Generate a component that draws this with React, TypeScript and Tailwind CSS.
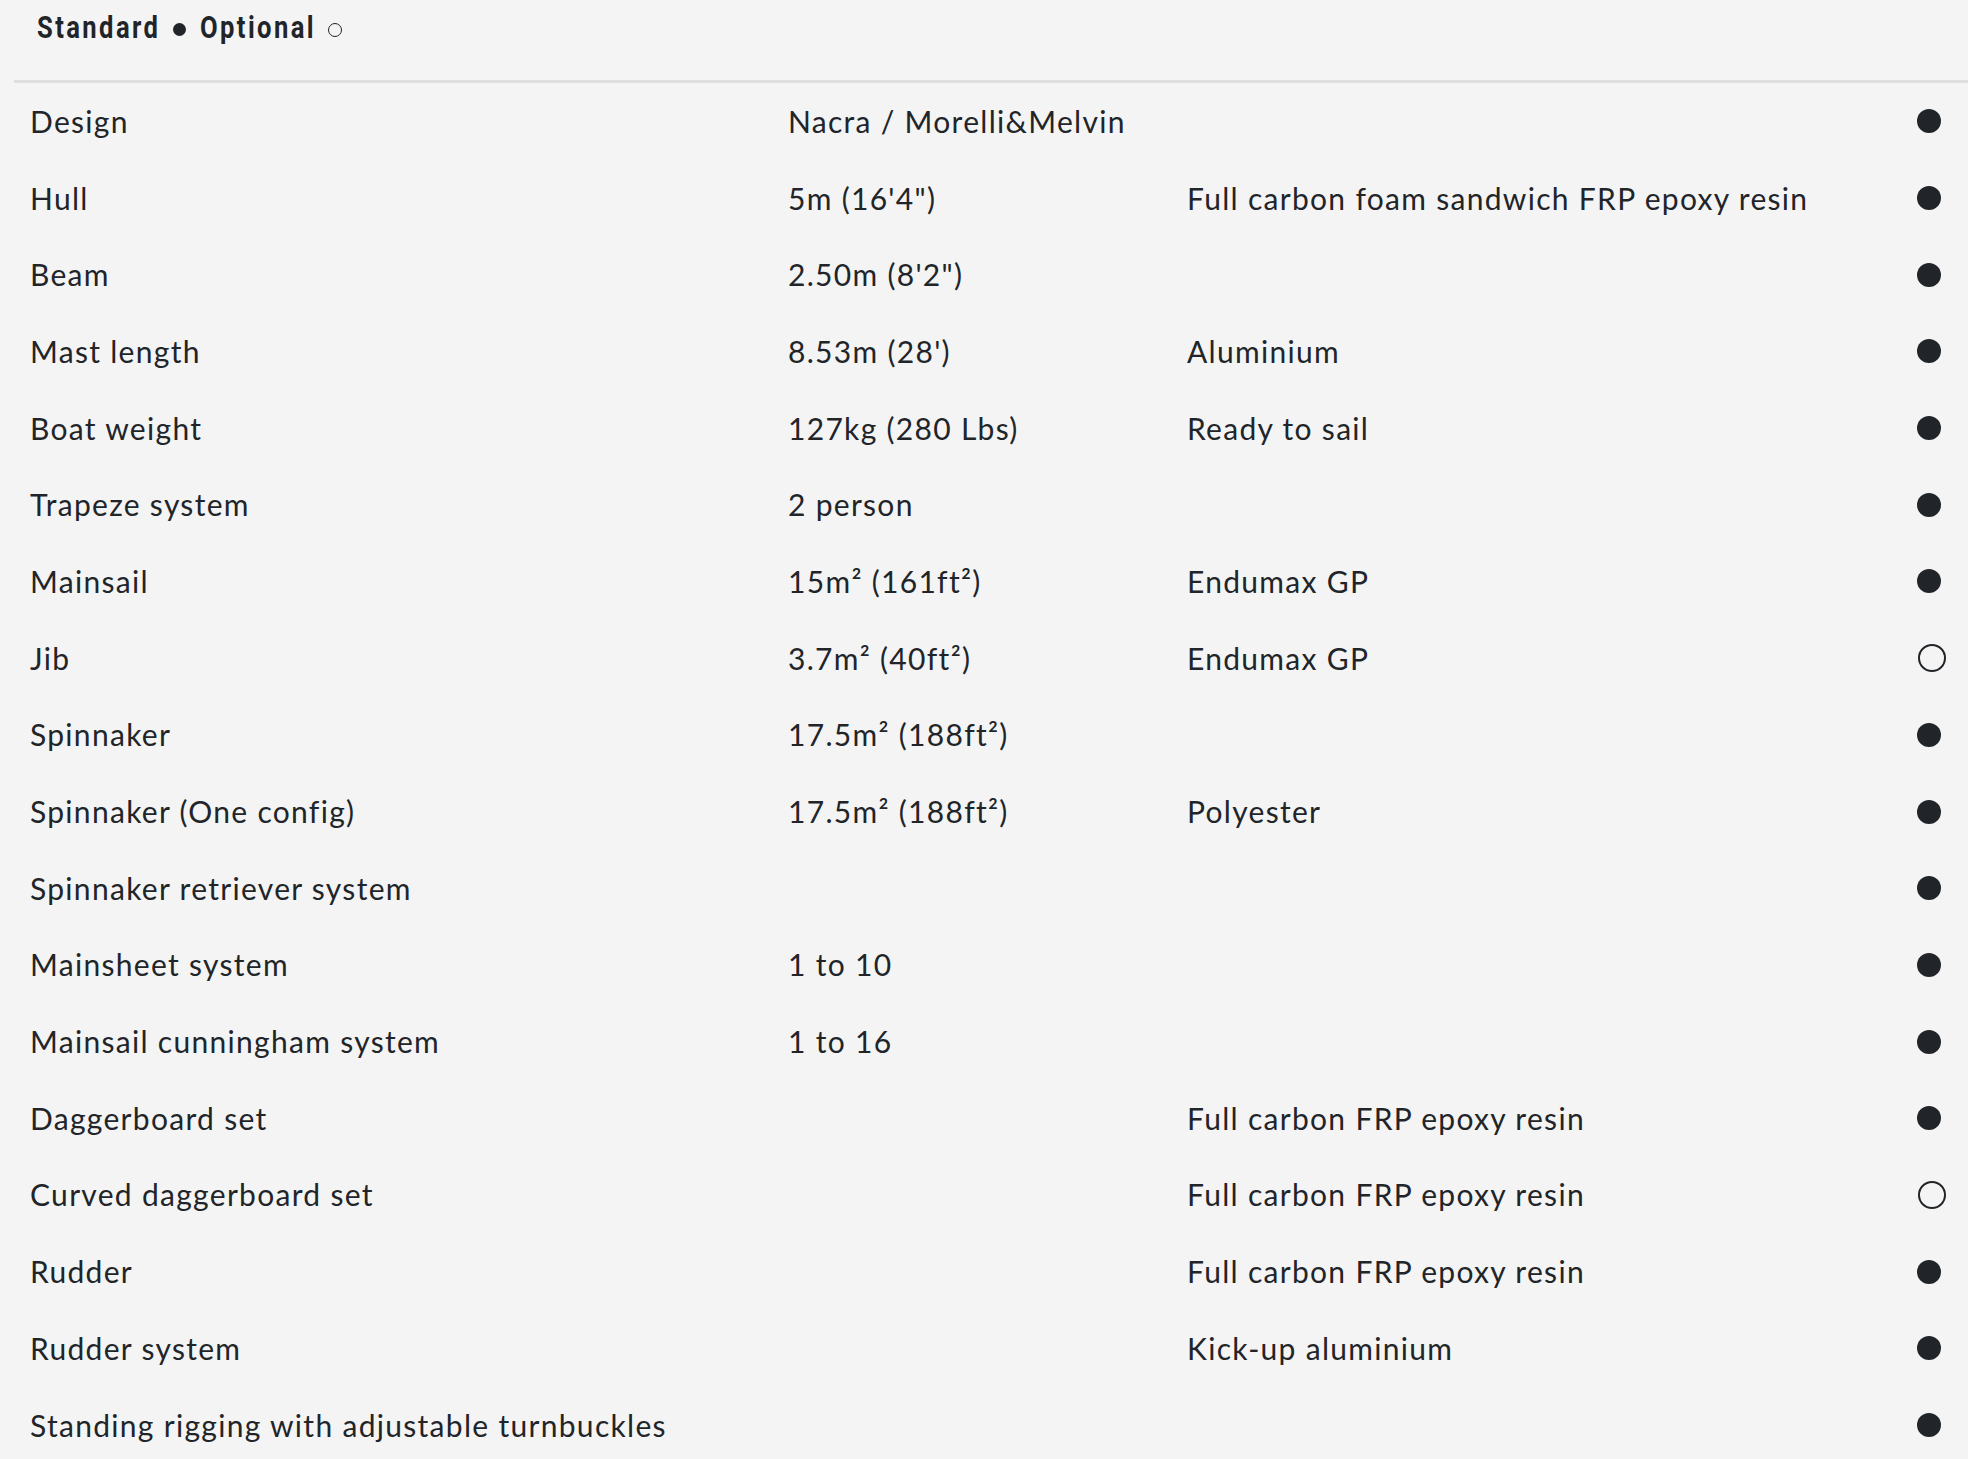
import React from "react";

type Row = { label: string; value?: string; note?: string; std: boolean };

const rows: Row[] = [
  { label: "Design", value: "Nacra / Morelli&Melvin", std: true },
  { label: "Hull", value: "5m (16'4\")", note: "Full carbon foam sandwich FRP epoxy resin", std: true },
  { label: "Beam", value: "2.50m (8'2\")", std: true },
  { label: "Mast length", value: "8.53m (28')", note: "Aluminium", std: true },
  { label: "Boat weight", value: "127kg (280 Lbs)", note: "Ready to sail", std: true },
  { label: "Trapeze system", value: "2 person", std: true },
  { label: "Mainsail", value: "15m² (161ft²)", note: "Endumax GP", std: true },
  { label: "Jib", value: "3.7m² (40ft²)", note: "Endumax GP", std: false },
  { label: "Spinnaker", value: "17.5m² (188ft²)", std: true },
  { label: "Spinnaker (One config)", value: "17.5m² (188ft²)", note: "Polyester", std: true },
  { label: "Spinnaker retriever system", std: true },
  { label: "Mainsheet system", value: "1 to 10", std: true },
  { label: "Mainsail cunningham system", value: "1 to 16", std: true },
  { label: "Daggerboard set", note: "Full carbon FRP epoxy resin", std: true },
  { label: "Curved daggerboard set", note: "Full carbon FRP epoxy resin", std: false },
  { label: "Rudder", note: "Full carbon FRP epoxy resin", std: true },
  { label: "Rudder system", note: "Kick-up aluminium", std: true },
  { label: "Standing rigging with adjustable turnbuckles", std: true },
];

const headFont = { fontFamily: "Roboto, sans-serif" };

export default function App() {
  return (
    <div className="min-h-[1459px] w-[1968px] bg-[#f4f4f4] text-[#212529] overflow-hidden">
      <div className="h-[80px] pl-[37px] pt-[7px] flex items-start">
        <div className="w-[122px] shrink-0">
          <span
            className="inline-block origin-left scale-x-[0.8] whitespace-nowrap text-[32px] font-bold tracking-[3px] leading-[40px]"
            style={headFont}
          >
            Standard
          </span>
        </div>
        <div className="ml-[14px] mt-[16px] h-[13px] w-[13px] rounded-full bg-[#212529] shrink-0" />
        <div className="ml-[14px] w-[115px] shrink-0">
          <span
            className="inline-block origin-left scale-x-[0.8] whitespace-nowrap text-[32px] font-bold tracking-[3px] leading-[40px]"
            style={headFont}
          >
            Optional
          </span>
        </div>
        <div className="ml-[13px] mt-[16px] h-[14px] w-[14px] rounded-full border-[1.5px] border-[#212529] shrink-0" />
      </div>
      <div className="ml-[14px] h-[3px] bg-[#dedede]" />
      <div style={{ fontFamily: "Lato, sans-serif" }} className="text-[30px] tracking-[1.3px]">
        {rows.map((r, i) => (
          <div key={i} className="flex h-[76.7px] items-center">
            <div className="w-[788px] pl-[30px] shrink-0">{r.label}</div>
            <div className="w-[399px] shrink-0">{r.value ?? ""}</div>
            <div className="flex-1">{r.note ?? ""}</div>
            <div className="w-[80px] shrink-0 flex items-center">
              {r.std ? (
                <div className="ml-[29px] h-[24px] w-[24px] rounded-full bg-[#212529]" />
              ) : (
                <div className="ml-[30px] h-[28px] w-[28px] rounded-full border-2 border-[#212529]" />
              )}
            </div>
          </div>
        ))}
      </div>
    </div>
  );
}
